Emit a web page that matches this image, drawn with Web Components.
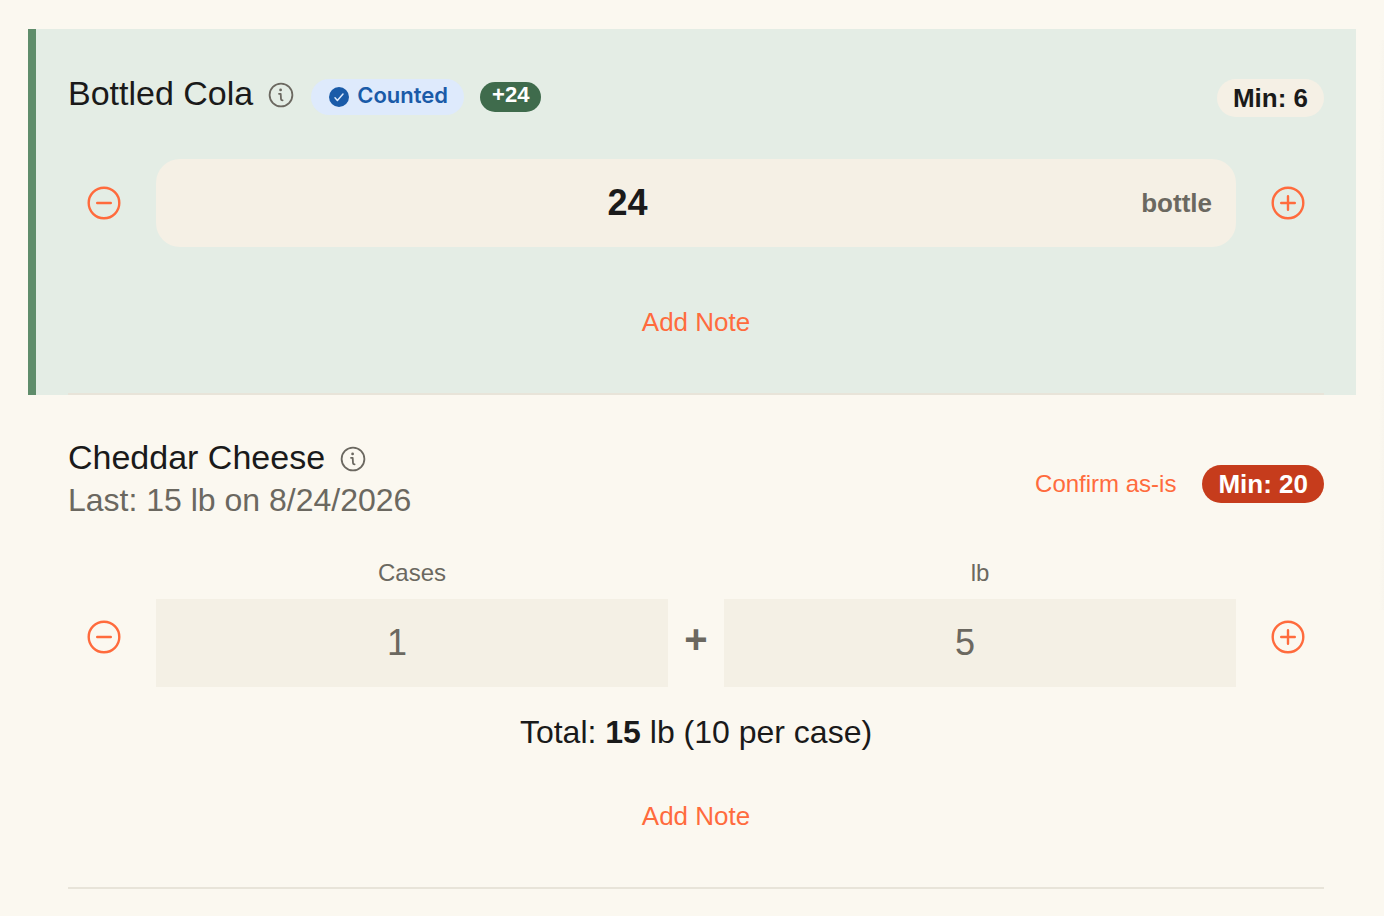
<!DOCTYPE html>
<html lang="en">
<head>
<meta charset="utf-8">
<meta name="viewport" content="width=device-width, initial-scale=1">
<title>Inventory Count</title>
<style>
    :root {
        --cream: #fbf8f0;
        --field: #f5f0e5;
        --line: #e8e4d9;
        --ink: #1a1a1a;
        --muted: #6b6860;
        --accent: #ff6b3d;
    }

    /* The gradient is the faint shadow along the right edge. */
    body {
        margin: 0;
        background: linear-gradient(to right, transparent, #f8f5ed) right 40px / 5px 570px no-repeat var(--cream);
        color: var(--ink);
        font-family: "Liberation Sans", Arial, sans-serif;
    }
</style>
</head>
<body>

<count-list>
    <count-item counted>
        <item-title slot="title">Bottled Cola</item-title>
        <status-badge slot="title" kind="counted">Counted</status-badge>
        <status-badge slot="title" kind="change">+24</status-badge>
        <status-badge slot="actions" kind="min">Min: 6</status-badge>
        <count-stepper>
            <count-field label="Bottled Cola count" value="24" unit="bottle"></count-field>
        </count-stepper>
    </count-item>
    <count-item>
        <item-title slot="title">Cheddar Cheese</item-title>
        <span slot="last">Last: 15 lb on 8/24/2026</span>
        <text-button slot="actions" small>Confirm as-is</text-button>
        <status-badge slot="actions" kind="low">Min: 20</status-badge>
        <count-stepper labelled>
            <count-field label="Cases" placeholder="1" show-label></count-field>
            <span class="plus">+</span>
            <count-field label="lb" placeholder="5" show-label></count-field>
        </count-stepper>
        <span slot="total">Total: <b>15</b> lb (10 per case)</span>
    </count-item>
</count-list>

<script>
    // Build a template out of a style block and some markup.
    function makeTemplate(css, html) {
        const template = document.createElement('template');
        template.innerHTML = `<style>${css}</style>${html}`;
        return template;
    }

    // Base class, clones the template of the subclass into an open shadow root.
    class BaseElement extends HTMLElement {
        constructor() {
            super();
            this.attachShadow({ mode: 'open' });
            this.shadowRoot.appendChild(this.constructor.template.content.cloneNode(true));
        }
    }

    // The list that holds all the items.
    class CountList extends BaseElement {
        static template = makeTemplate(`
            :host { display: block; padding: 29px 28px 0; }
        `, `<slot></slot>`);
    }

    // One inventory item: heading row, stepper, optional total and the note button.
    class CountItem extends BaseElement {
        static template = makeTemplate(`
            :host { display: block; border-left: 8px solid transparent; padding: 0 32px; }
            .inner { display: flex; flex-direction: column; border-bottom: 2px solid var(--line); padding: 42px 0 45px; }
            header { display: flex; align-items: center; justify-content: space-between; min-height: 94px; padding-bottom: 28px; }
            .heading { align-self: flex-start; }
            .title, .actions { display: flex; align-items: center; }
            .title { gap: 16px; }
            .actions { gap: 26px; }
            .last { color: var(--muted); font-size: 32px; line-height: 46px; }
            .total { font-size: 32px; line-height: 42px; text-align: center; padding-top: 24px; }
            .note { display: flex; justify-content: center; padding-top: 37px; }

            /* Counted items are tinted and have no last count or total. */
            :host([counted]) { background: #e4ede5; border-left-color: #5f8d6b; }
            :host([counted]) header { min-height: 54px; padding-bottom: 34px; }
            :host([counted]) .title { padding-top: 2px; }
            :host([counted]) ::slotted(item-title) { padding-bottom: 8px; }
            :host([counted]) .total { display: none; }
            :host([counted]) .note { padding-top: 49px; }
        `, `
            <section class="inner">
                <header>
                    <div class="heading">
                        <div class="title"><slot name="title"></slot></div>
                        <div class="last"><slot name="last"></slot></div>
                    </div>
                    <div class="actions"><slot name="actions"></slot></div>
                </header>
                <slot></slot>
                <div class="total"><slot name="total"></slot></div>
                <div class="note"><text-button>Add Note</text-button></div>
            </section>
        `);
    }

    // Item name with the info button next to it.
    class ItemTitle extends BaseElement {
        static template = makeTemplate(`
            :host { display: flex; align-items: center; gap: 14px; }
            h2 { margin: 0; font-size: 34px; font-weight: 400; line-height: 40px; }
            button { display: flex; margin: 0; padding: 4px 0 0; border: 0; background: none; color: var(--muted); }
            svg { width: 28px; height: 28px; }
        `, `
            <h2><slot></slot></h2>
            <button type="button" aria-label="Item details">
                <svg viewBox="0 0 28 28" fill="none" stroke="currentColor" stroke-width="1.8" stroke-linecap="round" stroke-linejoin="round">
                    <circle cx="14" cy="14" r="11.4"/>
                    <path d="M12 12.8h1.7l.3 5.4q.1 1.1 1.6 1.1"/>
                    <circle cx="13.6" cy="8.9" r="1.4" fill="currentColor" stroke="none"/>
                </svg>
            </button>
        `);
    }

    // Pill badge. The kind attribute picks the colours.
    class StatusBadge extends BaseElement {
        static template = makeTemplate(`
            :host { display: flex; align-items: center; border-radius: 20px; padding: 0 16px; font-size: 26px; font-weight: 700; line-height: 38px; white-space: nowrap; }
            svg { display: none; width: 20px; height: 20px; padding-top: 4px; }
            :host([kind="counted"]) { gap: 8px; background: #deeafc; color: #1a5ba8; padding: 0 16px 4px 18px; font-family: Inter, sans-serif; font-size: 22px; font-weight: 600; line-height: 32px; }
            :host([kind="counted"]) svg { display: block; }
            :host([kind="change"]) { background: #3f6b4c; color: #fff; padding: 0 12px 4px; font-size: 22px; line-height: 26px; }
            :host([kind="min"]) { background: var(--field); color: var(--ink); }
            :host([kind="low"]) { background: #c63c1c; color: #fff; }
        `, `
            <svg viewBox="0 0 20 20" aria-hidden="true">
                <circle cx="10" cy="10" r="10" fill="currentColor"/>
                <path d="M6 10.8l2.4 2.6 5.6-6.4" fill="none" stroke="#deeafc" stroke-width="1.5" stroke-linecap="round" stroke-linejoin="round"/>
            </svg>
            <slot></slot>
        `);
    }

    // Plain text button in the accent colour.
    class TextButton extends BaseElement {
        static template = makeTemplate(`
            :host { display: block; }
            button { padding: 10px 0; border: 0; background: none; color: var(--accent); font: inherit; font-size: 26px; line-height: 32px; }
            :host([small]) button { font-size: 24px; }
        `, `<button type="button"><slot></slot></button>`);
    }

    // Minus button, the fields, plus button.
    class CountStepper extends BaseElement {
        static template = makeTemplate(`
            :host { display: flex; align-items: center; gap: 16px; }
            .fields { display: flex; flex: 1; align-items: flex-end; }
            button { display: flex; padding: 18px; border: 0; background: none; color: var(--accent); }
            :host([labelled]) button { margin-top: 28px; }
            svg { width: 36px; height: 36px; }
            ::slotted(count-field) { flex: 1; }
            ::slotted(.plus) { width: 56px; color: var(--muted); font-size: 40px; font-weight: 700; line-height: 96px; text-align: center; }
        `, `
            <button type="button" aria-label="Decrease">
                <svg viewBox="0 0 36 36" fill="none" stroke="currentColor" stroke-width="2.4" stroke-linecap="round">
                    <circle cx="18" cy="18" r="15.3"/><path d="M11.2 18h13.6"/>
                </svg>
            </button>
            <div class="fields"><slot></slot></div>
            <button type="button" aria-label="Increase">
                <svg viewBox="0 0 36 36" fill="none" stroke="currentColor" stroke-width="2.4" stroke-linecap="round">
                    <circle cx="18" cy="18" r="15.3"/><path d="M11.2 18h13.6M18 11.2v13.6"/>
                </svg>
            </button>
        `);
    }

    // Number field, with a label above it or a unit inside it.
    class CountField extends BaseElement {
        static template = makeTemplate(`
            :host { display: flex; flex-direction: column; }
            label { display: none; color: var(--muted); font-size: 24px; line-height: 28px; padding-bottom: 12px; text-align: center; }
            :host([show-label]) label { display: block; }
            .box { display: flex; align-items: center; background: #f4f0e5; }
            input { flex: 1; min-width: 0; height: 88px; box-sizing: border-box; margin: 0; border: 0; outline: 0; padding: 0 30px 0 0; background: none; color: var(--ink); font: inherit; font-size: 36px; text-align: center; }
            input::placeholder { color: var(--muted); opacity: 1; }
            span { color: var(--muted); font-size: 26px; font-weight: 700; padding-right: 24px; }
            :host([unit]) .box { background: var(--field); border-radius: 24px; }
            :host([unit]) input { font-weight: 700; padding-right: 42px; }
        `, `
            <label for="count"></label>
            <div class="box"><input id="count" type="text" inputmode="decimal"></div>
        `);

        connectedCallback() {
            const input = this.shadowRoot.querySelector('input');
            const label = this.getAttribute('label');
            this.shadowRoot.querySelector('label').textContent = label;
            input.setAttribute('aria-label', label);
            input.value = this.getAttribute('value') || '';
            input.placeholder = this.getAttribute('placeholder') || '';

            if (this.hasAttribute('unit')) {
                const unit = document.createElement('span');
                unit.textContent = this.getAttribute('unit');
                input.after(unit);
            }
        }
    }

    customElements.define('text-button', TextButton);
    customElements.define('status-badge', StatusBadge);
    customElements.define('item-title', ItemTitle);
    customElements.define('count-field', CountField);
    customElements.define('count-stepper', CountStepper);
    customElements.define('count-item', CountItem);
    customElements.define('count-list', CountList);
</script>
</body>
</html>
